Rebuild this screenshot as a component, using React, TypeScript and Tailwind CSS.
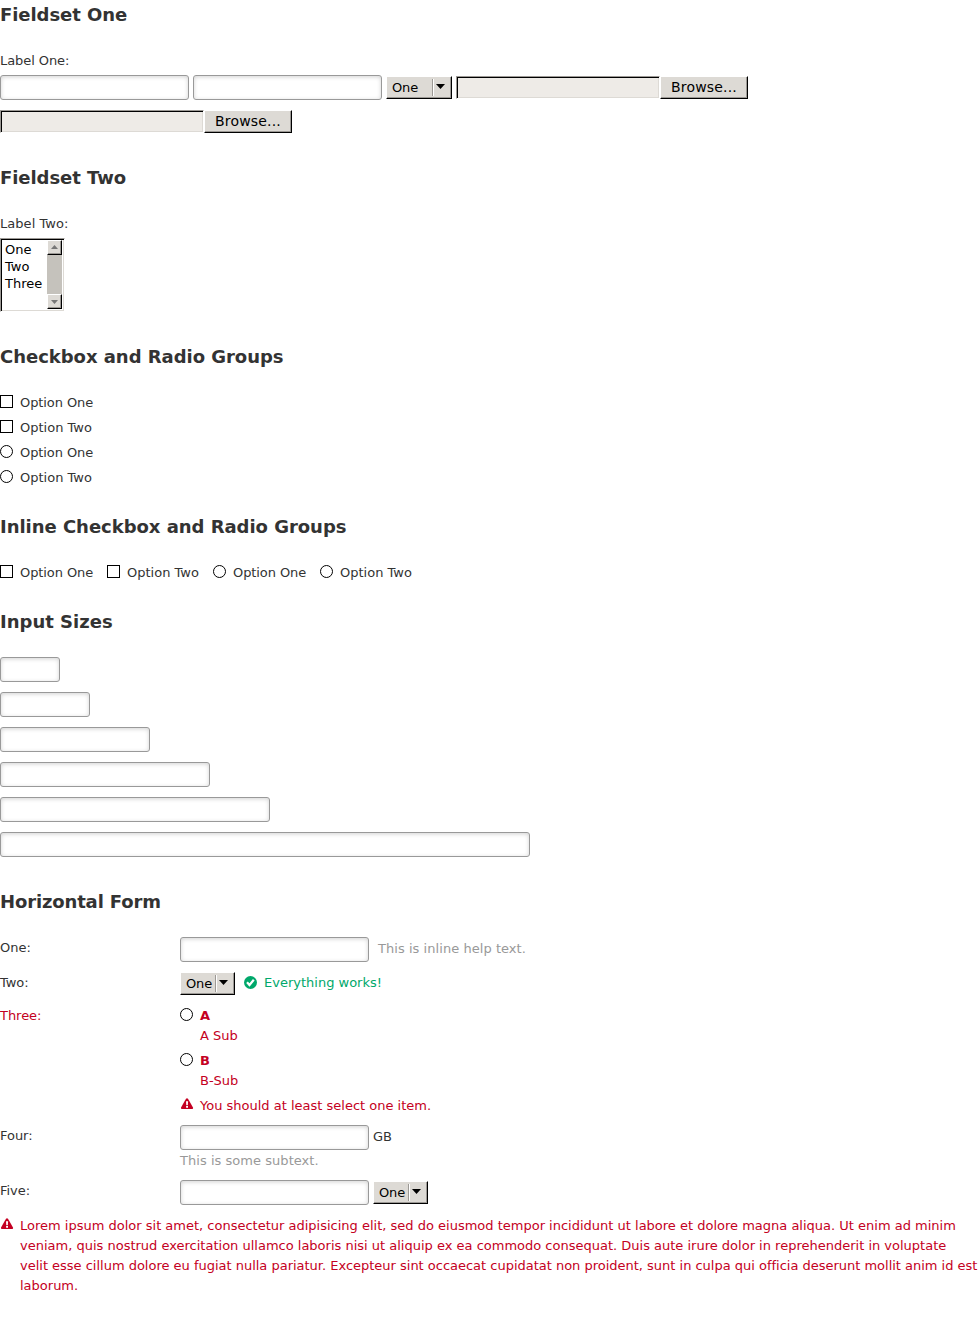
import React from "react";

function Heading({ tracking = "tracking-[-0.06px]", children }: { tracking?: string; children: React.ReactNode }) {
  return <h2 className={`h-[30px] text-[18px] leading-[30px] font-bold text-[#333] ${tracking}`}>{children}</h2>;
}

function TextInput({ width = "w-[189px]" }: { width?: string }) {
  return (
    <input
      type="text"
      className={`block h-[25px] shrink-0 rounded-[3px] border border-[#999] bg-white px-1 shadow-[inset_0_1px_4px_rgba(0,0,0,0.18)] outline-none ${width}`}
    />
  );
}

const raised =
  "border border-t-white border-l-white border-r-black border-b-black bg-[#dddad5] text-black shadow-[inset_-1px_-1px_0_#9c9995]";

function Select({ wide = false }: { wide?: boolean }) {
  return (
    <div className={`flex h-[23px] shrink-0 pl-[5px] ${wide ? "w-[66px]" : "w-[55px]"} ${raised}`}>
      <span className={`leading-[21px] tracking-[-0.15px] ${wide ? "w-[40px]" : "w-[29px]"}`}>One</span>
      <span className="mt-[2px] h-[17px] w-[2px] border-r border-l border-r-white border-l-[#9c9995]" />
      <svg className="mt-[7px] ml-[2px]" width="9" height="5" viewBox="0 0 9 5">
        <path d="M0 0h9L4.5 5z" fill="#000" />
      </svg>
    </div>
  );
}

function FileInput() {
  return (
    <div className="flex h-[23px]">
      <div className="w-[204px] border border-t-[#9c9995] border-r-white border-b-white border-l-[#9c9995] bg-[#eeebe7] shadow-[inset_1px_1px_0_#000,inset_-1px_-1px_0_#dddad5]" />
      <button className={`w-[88px] pt-px pb-px text-center text-[14px] leading-[19px] tracking-[0.17px] ${raised}`}>
        Browse...
      </button>
    </div>
  );
}

function ScrollButton({ up = false }: { up?: boolean }) {
  return (
    <span className={`flex h-[15px] w-[15px] justify-center ${up ? "pt-1" : "pt-[5px]"} ${raised}`}>
      <svg width="7" height="4" viewBox="0 0 7 4">
        <path d={up ? "M0 4h7L3.5 0z" : "M0 0h7L3.5 4z"} fill="#777" />
      </svg>
    </span>
  );
}

function ListBox() {
  return (
    <div className="mt-1 flex h-[74px] w-[65px] justify-between border border-t-[#9c9995] border-r-white border-b-white border-l-[#9c9995] pt-[1px] pr-[2px] pb-[2px] pl-[4px] text-black shadow-[inset_1px_1px_0_#000,inset_-1px_-1px_0_#dddad5]">
      <div className="pt-[1px] leading-[17px]">
        <div>One</div>
        <div>Two</div>
        <div>Three</div>
      </div>
      <div className="flex w-[15px] shrink-0 flex-col justify-between bg-[#c5c2bc]">
        <ScrollButton up />
        <ScrollButton />
      </div>
    </div>
  );
}

function Mark({ radio = false }: { radio?: boolean }) {
  return (
    <svg className="mt-[3px] mr-[7px] shrink-0" width="13" height="13" viewBox="0 0 13 13" fill="#fff" stroke="#000">
      {radio ? <circle cx="6.5" cy="6.5" r="6" /> : <rect x="0.5" y="0.5" width="12" height="12" />}
    </svg>
  );
}

function Option({ radio, width, children }: { radio?: boolean; width?: string; children: React.ReactNode }) {
  return (
    <label className={`flex h-5 ${width ?? ""}`}>
      <Mark radio={radio} />
      <span className={`mt-px whitespace-nowrap ${children === "Option One" ? "tracking-[-0.08px]" : ""}`}>
        {children}
      </span>
    </label>
  );
}

function Warning() {
  return (
    <svg className="mt-[3px] mr-[6px] ml-[1px] shrink-0" width="13" height="12" viewBox="0 0 13 12">
      <path d="M5 0.7Q6 -.4 7 0.7L12 9.6Q12.3 11 11.3 11H.8Q-.3 11 0 9.6Z" fill="#c40022" />
      <path d="M5 3.2h2.1L6.8 7.2H5.3zM5.1 8h1.9v1.8H5.1z" fill="#fff" />
    </svg>
  );
}

function Row({ label, children }: { label: string; children: React.ReactNode }) {
  return (
    <div className="flex">
      <div className="w-[180px] shrink-0 pt-px tracking-[-0.03px]">{label}</div>
      <div>{children}</div>
    </div>
  );
}

export default function App() {
  return (
    <form className="h-[1325px] w-[978px] overflow-hidden bg-white font-['DejaVu_Sans',sans-serif] text-[13px] leading-5 text-[#333]">
      <section className="h-[163px]">
        <Heading>Fieldset One</Heading>
        <div className="mt-[21px] tracking-[-0.08px]">Label One:</div>
        <div className="mt-1 flex gap-1">
          <TextInput />
          <TextInput />
          <div className="flex gap-1 pt-[1px]">
            <Select wide />
            <FileInput />
          </div>
        </div>
        <div className="mt-[10px]">
          <FileInput />
        </div>
      </section>

      <section className="h-[179px]">
        <Heading>Fieldset Two</Heading>
        <div className="mt-[21px] tracking-[0.05px]">Label Two:</div>
        <ListBox />
      </section>

      <section className="h-[170px]">
        <Heading tracking="tracking-[-0.03px]">Checkbox and Radio Groups</Heading>
        <div className="mt-5 flex flex-col gap-[5px]">
          <Option>Option One</Option>
          <Option>Option Two</Option>
          <Option radio>Option One</Option>
          <Option radio>Option Two</Option>
        </div>
      </section>

      <section className="h-[95px]">
        <Heading tracking="tracking-[-0.03px]">Inline Checkbox and Radio Groups</Heading>
        <div className="mt-5 flex gap-[14px]">
          <Option width="w-[93px]">Option One</Option>
          <Option width="w-[92px]">Option Two</Option>
          <Option width="w-[93px]" radio>Option One</Option>
          <Option width="w-[92px]" radio>Option Two</Option>
        </div>
      </section>

      <section className="h-[280px]">
        <Heading tracking="tracking-normal">Input Sizes</Heading>
        <div className="mt-5 flex flex-col gap-[10px]">
          <TextInput width="w-[60px]" />
          <TextInput width="w-[90px]" />
          <TextInput width="w-[150px]" />
          <TextInput width="w-[210px]" />
          <TextInput width="w-[270px]" />
          <TextInput width="w-[530px]" />
        </div>
      </section>

      <section>
        <Heading tracking="tracking-[-0.14px]">Horizontal Form</Heading>
        <div className="mt-5 flex flex-col gap-[10px]">
          <Row label="One:">
            <div className="flex">
              <TextInput />
              <span className="mt-[2px] ml-[9px] tracking-[0.05px] text-[#999]">This is inline help text.</span>
            </div>
          </Row>
          <Row label="Two:">
            <div className="flex">
              <Select />
              <span className="ml-[9px] flex text-[#00a86b]">
                <svg className="mt-1 mr-[7px]" width="13" height="13" viewBox="0 0 13 13">
                  <circle cx="6.5" cy="6.5" r="6.5" fill="#00a86b" />
                  <path d="M3 6.3l2.5 2.7 4.3-5.2" fill="none" stroke="#fff" strokeWidth="2.2" />
                </svg>
                <span className="mt-px">Everything works!</span>
              </span>
            </div>
          </Row>
          <div className="text-[#c40022]">
            <Row label="Three:">
              <div className="flex flex-col gap-[5px]">
                <div>
                  <Option radio><b>A</b></Option>
                  <div className="h-5 pt-px pl-5">A Sub</div>
                </div>
                <div>
                  <Option radio><b>B</b></Option>
                  <div className="h-5 pt-px pl-5">B-Sub</div>
                </div>
                <div className="flex h-5">
                  <Warning />
                  <span className="mt-px">You should at least select one item.</span>
                </div>
              </div>
            </Row>
          </div>
          <Row label="Four:">
            <div className="flex gap-1">
              <TextInput />
              <span className="mt-[2px]">GB</span>
            </div>
            <div className="h-5 pt-px tracking-[0.04px] text-[#999]">This is some subtext.</div>
          </Row>
          <Row label="Five:">
            <div className="flex gap-1">
              <TextInput />
              <div className="pt-[1px]">
                <Select />
              </div>
            </div>
          </Row>
          <div className="flex text-[#c40022]">
            <Warning />
            <p className="mt-px whitespace-nowrap">
              Lorem ipsum dolor sit amet, consectetur adipisicing elit, sed do eiusmod tempor incididunt ut labore et dolore magna aliqua. Ut enim ad minim
              <br />
              veniam, quis nostrud exercitation ullamco laboris nisi ut aliquip ex ea commodo consequat. Duis aute irure dolor in reprehenderit in voluptate
              <br />
              <span className="tracking-[-0.01px]">
                velit esse cillum dolore eu fugiat nulla pariatur. Excepteur sint occaecat cupidatat non proident, sunt in culpa qui officia deserunt mollit anim id est
              </span>
              <br />
              laborum.
            </p>
          </div>
        </div>
      </section>
    </form>
  );
}
